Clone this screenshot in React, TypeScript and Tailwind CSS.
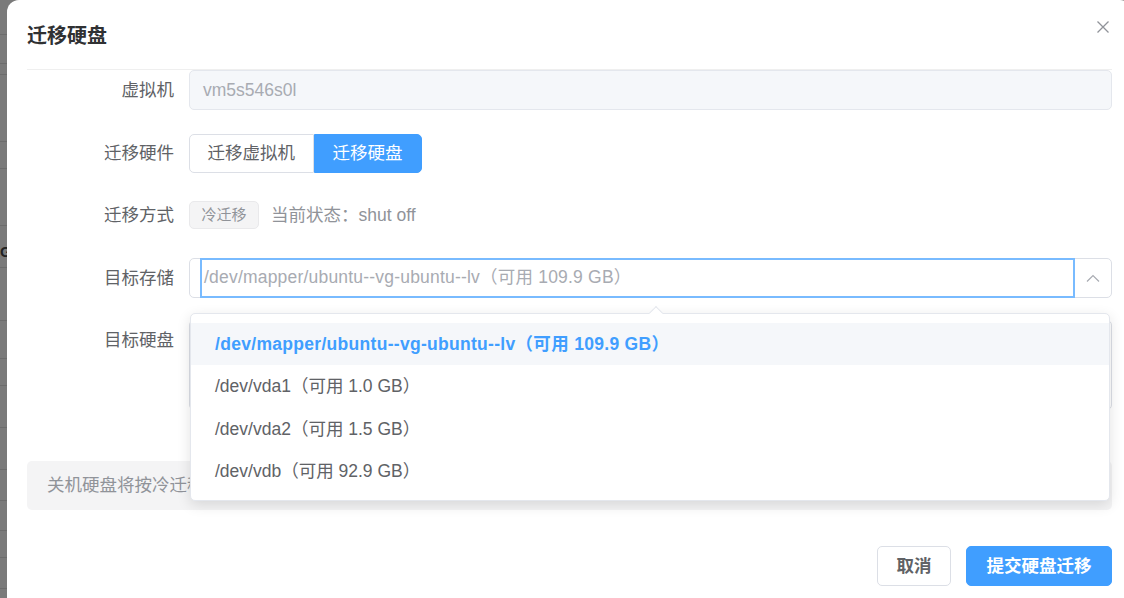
import React from "react";

const font = { fontFamily: '"Liberation Sans", Arial, "Noto Sans CJK SC", sans-serif' };

const options = [
  "/dev/mapper/ubuntu--vg-ubuntu--lv（可用 109.9 GB）",
  "/dev/vda1（可用 1.0 GB）",
  "/dev/vda2（可用 1.5 GB）",
  "/dev/vdb（可用 92.9 GB）",
];

function Row({ label, children, className = "" }: { label: string; children: React.ReactNode; className?: string }) {
  return (
    <div className={"flex " + className}>
      <div className="w-[162px] shrink-0 pr-[15px] text-right text-[17.5px] leading-[40px] text-[#606266]">{label}</div>
      <div className="flex-1 min-w-0">{children}</div>
    </div>
  );
}

function Backdrop() {
  const lines = [34, 63, 74, 141, 168, 225, 267, 320, 358, 385, 427, 469, 500, 530, 557, 588];
  return (
    <div className="absolute inset-0 bg-[#7a7a7a]">
      {lines.map((y) => (
        <div key={y} className="absolute left-0 w-[10px] h-px bg-[#6c6c6c]" style={{ top: y }} />
      ))}
      <div className="absolute left-0 top-[243px] text-[15px] font-bold text-[#222] leading-[18px]">GB</div>
    </div>
  );
}

export default function App() {
  return (
    <div className="relative w-[1124px] h-[598px] overflow-hidden" style={font}>
      <Backdrop />
      <div className="absolute left-[7px] top-0 w-[1125px] h-[620px] bg-white rounded-[12px] px-[20px]">
        {/* header */}
        <div className="relative pt-[22px] pb-[19px] border-b border-[#efefef]">
          <h2 className="text-[20px] leading-[28px] font-bold text-[#303133]">迁移硬盘</h2>
          <button className="absolute right-[2px] top-[20px] w-[14px] h-[14px] text-[#909399]">
            <svg viewBox="0 0 14 14" width="14" height="14" fill="none" stroke="currentColor" strokeWidth="1.3">
              <path d="M1.5 1.5 L12.5 12.5 M12.5 1.5 L1.5 12.5" />
            </svg>
          </button>
        </div>

        {/* form */}
        <div>
          <Row label="虚拟机" className="mb-[22.5px]">
            <div className="h-[40px] rounded-[5px] border border-[#e4e7ed] bg-[#f5f7fa] px-[13px] flex items-center text-[17.5px] text-[#a8abb2]">
              vm5s546s0l
            </div>
          </Row>

          <Row label="迁移硬件" className="mb-[22.5px]">
            <div className="flex h-[39px] mt-px">
              <div className="h-full px-[17.5px] flex items-center border border-[#dcdfe6] rounded-l-[5px] text-[17.5px] text-[#606266] bg-white">
                迁移虚拟机
              </div>
              <div className="h-full px-[18px] flex items-center border border-[#409eff] rounded-r-[5px] text-[17.5px] text-white bg-[#409eff]">
                迁移硬盘
              </div>
            </div>
          </Row>

          <Row label="迁移方式" className="mb-[22.5px]">
            <div className="flex items-center h-[40px] gap-[12px]">
              <span className="h-[28px] px-[11.5px] flex items-center rounded-[5px] border border-[#e9e9eb] bg-[#f4f4f5] text-[15px] text-[#909399]">
                冷迁移
              </span>
              <span className="text-[17.5px] text-[#909399]">当前状态：shut off</span>
            </div>
          </Row>

          <Row label="目标存储" className="mb-[22.5px] relative z-10">
            <div className="relative">
              <div className="h-[40px] rounded-[5px] border border-[#dcdfe6] bg-white flex items-stretch pl-[10px]">
                <div className="flex-1 -my-px border-2 border-[#79bbff] flex items-center pl-[2px] text-[17.5px] tracking-[0.2px] text-[#a8abb2] whitespace-nowrap overflow-hidden">
                  /dev/mapper/ubuntu--vg-ubuntu--lv（可用 109.9 GB）
                </div>
                <div className="w-[36px] flex items-center justify-center text-[#a8abb2]">
                  <svg viewBox="0 0 14 8" width="14" height="8" fill="none" stroke="currentColor" strokeWidth="1.2">
                    <path d="M1 7.5 L7 1.5 L13 7.5" />
                  </svg>
                </div>
              </div>

              {/* dropdown */}
              <div className="absolute left-px right-[2px] top-[55px] rounded-[5px] border border-[#e4e7ed] bg-white shadow-[0_4px_14px_rgba(0,0,0,0.12)] pt-[9px] pb-[7px]">
                <div className="absolute left-[460px] top-[-6px] w-[10px] h-[10px] rotate-45 bg-white border-l border-t border-[#e4e7ed]" />
                {options.map((o, i) => (
                  <div
                    key={o}
                    className={
                      "h-[42.5px] px-[24px] flex items-center text-[17.5px] whitespace-nowrap " +
                      (i === 0 ? "bg-[#f5f7fa] text-[#409eff] font-bold tracking-[0.3px]" : "text-[#606266]")
                    }
                  >
                    {o}
                  </div>
                ))}
              </div>
            </div>
          </Row>

          <Row label="目标硬盘" className="mb-[51px]">
            <div className="h-[90px] rounded-[5px] border border-[#dcdfe6] bg-white" />
          </Row>

          <div className="h-[49px] rounded-[5px] bg-[#f4f4f5] px-[20px] flex items-center text-[17.5px] text-[#909399]">
            关机硬盘将按冷迁移方式迁移，迁移过程中请勿启动虚拟机
          </div>
        </div>

        {/* footer */}
        <div className="flex justify-end gap-[15px] pt-[36px]">
          <button className="h-[40px] px-[18.5px] rounded-[5px] border border-[#dcdfe6] bg-white text-[17.5px] font-bold text-[#606266]">
            取消
          </button>
          <button className="h-[40px] px-[19.5px] rounded-[5px] border border-[#409eff] bg-[#409eff] text-[17.5px] font-bold text-white">
            提交硬盘迁移
          </button>
        </div>
      </div>
    </div>
  );
}
